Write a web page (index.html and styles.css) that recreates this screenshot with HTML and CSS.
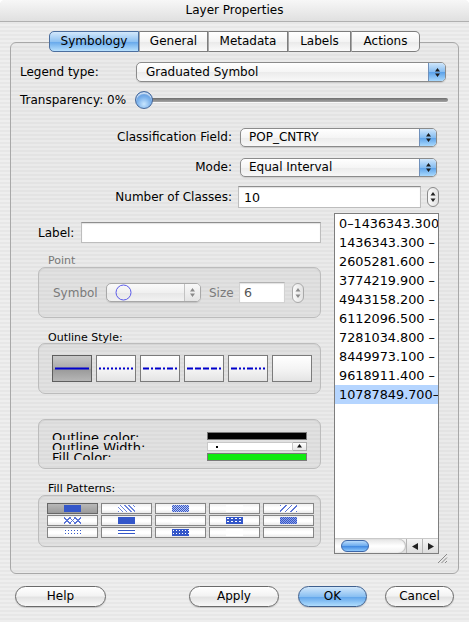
FILE: index.html
```html
<!DOCTYPE html>
<html lang="en">
<head>
  <meta charset="UTF-8">
  <title>Layer Properties</title>
  <link rel="stylesheet" href="styles.css">
</head>
<body>
  <div class="window">
    <div class="titlebar">Layer Properties</div>

    <div class="tabs">
      <span class="tab active">Symbology</span>
      <span class="tab">General</span>
      <span class="tab">Metadata</span>
      <span class="tab">Labels</span>
      <span class="tab">Actions</span>
    </div>

    <div class="tabbox">
      <div class="legend-row">
        <span class="legend-label">Legend type:</span>
        <div class="popup legend-popup">
          <span class="popup-text">Graduated Symbol</span>
          <span class="popup-cap"><svg width="7" height="11" viewBox="0 0 7 11"><path d="M3.5 1 L6 4.5 L1 4.5 Z M1 6.5 L6 6.5 L3.5 10 Z" fill="#1c1c1c"/></svg></span>
        </div>
      </div>

      <div class="trans-row">
        <span class="trans-label">Transparency: 0%</span>
        <div class="slider">
          <span class="slider-track"></span>
          <span class="slider-knob"></span>
        </div>
      </div>

      <div class="class-grid">
        <span class="field-label">Classification Field:</span>
        <div class="popup small-popup">
          <span class="popup-text">POP_CNTRY</span>
          <span class="popup-cap"><svg width="7" height="11" viewBox="0 0 7 11"><path d="M3.5 1 L6 4.5 L1 4.5 Z M1 6.5 L6 6.5 L3.5 10 Z" fill="#1c1c1c"/></svg></span>
        </div>
        <span class="field-label">Mode:</span>
        <div class="popup small-popup">
          <span class="popup-text">Equal Interval</span>
          <span class="popup-cap"><svg width="7" height="11" viewBox="0 0 7 11"><path d="M3.5 1 L6 4.5 L1 4.5 Z M1 6.5 L6 6.5 L3.5 10 Z" fill="#1c1c1c"/></svg></span>
        </div>
        <span class="field-label">Number of Classes:</span>
        <div class="num-field">
          <span class="textfield classes-field">10</span>
          <span class="stepper"><svg width="10" height="18" viewBox="0 0 10 18"><path d="M5 4 L7.5 7.5 L2.5 7.5 Z M2.5 10.5 L7.5 10.5 L5 14 Z" fill="#222"/></svg></span>
        </div>
      </div>

      <div class="lower">
        <div class="left-col">
          <div class="label-row">
            <span class="label-text">Label:</span>
            <span class="textfield label-field"></span>
          </div>

          <div class="caption caption-point">Point</div>
          <div class="group point-group">
            <span class="sym-label">Symbol</span>
            <div class="popup sym-popup">
              <svg class="sym-circle" width="17" height="17" viewBox="0 0 17 17"><circle cx="8.5" cy="8.5" r="7.5" fill="none" stroke="#5a5ae8" stroke-width="1"/></svg>
              <span class="popup-cap"><svg width="7" height="11" viewBox="0 0 7 11"><path d="M3.5 1 L6 4.5 L1 4.5 Z M1 6.5 L6 6.5 L3.5 10 Z" fill="#8a8a8a"/></svg></span>
            </div>
            <span class="size-label">Size</span>
            <span class="textfield size-field">6</span>
            <span class="stepper stepper-off"><svg width="10" height="18" viewBox="0 0 10 18"><path d="M5 4 L7.5 7.5 L2.5 7.5 Z M2.5 10.5 L7.5 10.5 L5 14 Z" fill="#8a8a8a"/></svg></span>
          </div>

          <div class="caption caption-outline">Outline Style:</div>
          <div class="group outline-group">
            <span class="line-btn selected"><svg width="38" height="25"><line x1="2" y1="12.5" x2="36" y2="12.5" stroke="#0000cc" stroke-width="2"/></svg></span>
            <span class="line-btn"><svg width="38" height="25"><line x1="2" y1="12.5" x2="36" y2="12.5" stroke="#0000cc" stroke-width="2" stroke-dasharray="2 2"/></svg></span>
            <span class="line-btn"><svg width="38" height="25"><line x1="2" y1="12.5" x2="36" y2="12.5" stroke="#0000cc" stroke-width="2" stroke-dasharray="6 2 2 2"/></svg></span>
            <span class="line-btn"><svg width="38" height="25"><line x1="2" y1="12.5" x2="36" y2="12.5" stroke="#0000cc" stroke-width="2" stroke-dasharray="6 2"/></svg></span>
            <span class="line-btn"><svg width="38" height="25"><line x1="2" y1="12.5" x2="36" y2="12.5" stroke="#0000cc" stroke-width="2" stroke-dasharray="6 2 2 2 2 2"/></svg></span>
            <span class="line-btn"></span>
          </div>

          <div class="group color-group">
            <div class="color-labels">
              <div class="clip-row">Outline color:</div>
              <div class="clip-row">Outline Width:</div>
              <div class="clip-row">Fill Color:</div>
            </div>
            <div class="swatches">
              <span class="swatch swatch-black"></span>
              <div class="width-row">
                <span class="width-field"><span class="tick"></span></span>
                <span class="width-step"><svg width="9" height="8" viewBox="0 0 9 8"><path d="M4.5 1 L7 4.5 L2 4.5 Z" fill="#111"/></svg></span>
              </div>
              <span class="swatch swatch-green"></span>
            </div>
          </div>

          <div class="caption caption-fill">Fill Patterns:</div>
          <div class="group fill-group">
            <span class="cell selected"><span class="pat p1"></span></span>
            <span class="cell"><span class="pat p2"></span></span>
            <span class="cell"><span class="pat p3"></span></span>
            <span class="cell"><span class="pat p4"></span></span>
            <span class="cell"><span class="pat p5"></span></span>
            <span class="cell"><span class="pat p6"></span></span>
            <span class="cell"><span class="pat p7"></span></span>
            <span class="cell"><span class="pat p4"></span></span>
            <span class="cell"><span class="pat p9"></span></span>
            <span class="cell"><span class="pat p10"></span></span>
            <span class="cell"><span class="pat p11"></span></span>
            <span class="cell"><span class="pat p12"></span></span>
            <span class="cell"><span class="pat p13"></span></span>
            <span class="cell"><span class="pat p14"></span></span>
            <span class="cell"><span class="pat p15"></span></span>
          </div>
        </div>

        <div class="class-list">
          <div class="list-items">
            <div class="list-item">0–1436343.300</div>
            <div class="list-item">1436343.300 –</div>
            <div class="list-item">2605281.600 –</div>
            <div class="list-item">3774219.900 –</div>
            <div class="list-item">4943158.200 –</div>
            <div class="list-item">6112096.500 –</div>
            <div class="list-item">7281034.800 –</div>
            <div class="list-item">8449973.100 –</div>
            <div class="list-item">9618911.400 –</div>
            <div class="list-item current">10787849.700–</div>
          </div>
          <div class="hscroll">
            <div class="scroll-track"><span class="scroll-thumb"></span></div>
            <span class="scroll-arrow"><svg width="8" height="9" viewBox="0 0 8 9"><path d="M1 4.5 L7 1 L7 8 Z" fill="#222"/></svg></span>
            <span class="scroll-arrow"><svg width="8" height="9" viewBox="0 0 8 9"><path d="M7 4.5 L1 1 L1 8 Z" fill="#222"/></svg></span>
          </div>
          <svg class="grip" width="11" height="11" viewBox="0 0 11 11">
            <path d="M10 1 L1 10 M10 4.5 L4.5 10 M10 8 L8 10" stroke="#8a8a8a" stroke-width="1"/>
          </svg>
        </div>
      </div>
    </div>

    <div class="buttons">
      <span class="btn btn-help">Help</span>
      <span class="btn btn-apply">Apply</span>
      <span class="btn btn-ok">OK</span>
      <span class="btn btn-cancel">Cancel</span>
    </div>
  </div>
</body>
</html>
```

FILE: styles.css
```css
* {
  box-sizing: border-box;
}

body {
  margin: 0;
  background: #fff;
}

.window {
  width: 469px;
  height: 622px;
  overflow: hidden;
  border-radius: 5px 5px 0 0;
  font: 12px "DejaVu Sans", "Liberation Sans", sans-serif;
  color: #000;
  background: repeating-linear-gradient(#eeeeee 0 2px, #e7e7e7 2px 4px);
}

.titlebar {
  height: 22px;
  line-height: 21px;
  text-align: center;
  border-bottom: 1px solid #b0b0b0;
  background: linear-gradient(#f7f7f7, #e0e0e0);
}

/* tabs */
.tabs {
  display: flex;
  justify-content: center;
  margin-top: 9px;
  height: 21px;
  position: relative;
  z-index: 1;
}

.tab {
  height: 21px;
  line-height: 19px;
  text-align: center;
  border: 1px solid #7d7d7d;
  border-left: 1px solid #a8a8a8;
  background: linear-gradient(#ffffff, #f4f4f4 50%, #e9e9e9 51%, #fafafa);
}

.tab:nth-child(1) { width: 90px; border-left-color: #7d7d7d; border-radius: 5px 0 0 5px; }
.tab:nth-child(2) { width: 69px; }
.tab:nth-child(3) { width: 80px; }
.tab:nth-child(4) { width: 63px; }
.tab:nth-child(5) { width: 69px; border-radius: 0 5px 5px 0; }

.tab.active {
  border-color: #4b6e9e;
  background: linear-gradient(#d3e8fb, #8fc2f2 50%, #63a6ea 51%, #b7e0fd);
}

.tabbox {
  margin: -10px 10px 0;
  height: 532px;
  border: 1px solid #a8a8a8;
  border-radius: 6px;
  background: rgba(0, 0, 0, 0.015);
}

/* popups */
.popup {
  display: flex;
  align-items: center;
  height: 20px;
  border: 1px solid #8b8b8b;
  border-radius: 5px;
  overflow: hidden;
  background: linear-gradient(#ffffff, #f5f5f5 50%, #ebebeb 51%, #f8f8f8);
  box-shadow: 0 1px 1px rgba(0, 0, 0, 0.12);
}

.popup-text {
  padding-left: 8px;
  white-space: nowrap;
}

.popup-cap {
  margin-left: auto;
  width: 17px;
  height: 100%;
  display: flex;
  align-items: center;
  justify-content: center;
  border-left: 1px solid #6f90bb;
  background: linear-gradient(#cfe6fb, #86bdf1 50%, #5aa0e8 51%, #a9d9fd);
}

.legend-row {
  display: flex;
  align-items: center;
  height: 20px;
  margin-top: 19px;
  padding-left: 9px;
}

.legend-label {
  width: 116px;
}

.legend-popup {
  width: 310px;
}

.legend-popup .popup-text {
  padding-left: 9px;
}

/* slider */
.trans-row {
  display: flex;
  align-items: center;
  height: 18px;
  margin-top: 9px;
  padding-left: 9px;
}

.trans-label {
  width: 115px;
}

.slider {
  position: relative;
  width: 313px;
  height: 18px;
}

.slider-track {
  position: absolute;
  left: 6px;
  right: 0;
  top: 7px;
  height: 4px;
  border-radius: 2px;
  background: linear-gradient(#6e6e6e, #a5a5a5);
  box-shadow: 0 1px 0 #f8f8f8;
}

.slider-knob {
  position: absolute;
  left: 0;
  top: 0;
  width: 18px;
  height: 18px;
  border-radius: 50%;
  border: 1px solid #44679a;
  background: radial-gradient(circle at 50% 75%, #c8e6ff, #7fb4ec 45%, #3e7fd0 100%);
  box-shadow: inset 0 2px 1px rgba(255, 255, 255, 0.7);
}

/* classification */
.class-grid {
  display: grid;
  grid-template-columns: 221px 200px;
  grid-auto-rows: 20px;
  column-gap: 8px;
  row-gap: 10px;
  margin-top: 18px;
}

.field-label {
  align-self: center;
  text-align: right;
}

.small-popup {
  width: 197px;
  height: 19px;
  align-self: center;
}

.num-field {
  display: flex;
  align-items: center;
  margin-left: -2px;
}

.textfield {
  display: flex;
  align-items: center;
  background: #fff;
  border: 1px solid #bdbdbd;
  border-top-color: #8e8e8e;
  box-shadow: inset 0 1px 1px rgba(0, 0, 0, 0.12);
}

.classes-field {
  width: 183px;
  height: 22px;
  padding-left: 5px;
  font-size: 12.6px;
}

.stepper {
  display: flex;
  width: 12px;
  height: 20px;
  margin-left: 6px;
  border: 1px solid #8a8a8a;
  border-radius: 6px;
  overflow: hidden;
  background: linear-gradient(90deg, #fafafa, #e2e2e2);
}

/* lower part */
.lower {
  display: flex;
  margin-top: 6px;
  padding-left: 27px;
}

.left-col {
  width: 283px;
}

.label-row {
  display: flex;
  align-items: center;
  height: 21px;
  margin-top: 9px;
}

.label-text {
  width: 43px;
}

.label-field {
  flex: 1;
  height: 21px;
}

.caption {
  height: 13px;
  line-height: 13px;
  padding-left: 10px;
  font-size: 11px;
}

.caption-point {
  margin-top: 11px;
  color: #777;
}

.caption-outline {
  margin-top: 13px;
  height: 12px;
}

.caption-fill {
  margin-top: 13px;
}

.group {
  border: 1px solid #bcbcbc;
  border-radius: 7px;
  background: rgba(0, 0, 0, 0.035);
  box-shadow: inset 0 1px 1px rgba(0, 0, 0, 0.06);
}

.point-group {
  display: flex;
  align-items: center;
  height: 51px;
  padding-left: 14px;
  color: #7a7a7a;
}

.sym-label {
  width: 53px;
}

.sym-popup {
  width: 95px;
  height: 19px;
  border-color: #a8a8a8;
  background: linear-gradient(#fafafa, #f0f0f0 50%, #e6e6e6 51%, #f2f2f2);
}

.sym-circle {
  margin-left: 8px;
}

.sym-popup .popup-cap {
  width: 16px;
  border-left-color: #c2c2c2;
  background: linear-gradient(#f8f8f8, #e4e4e4);
}

.size-label {
  width: 30px;
  margin-left: 8px;
}

.size-field {
  width: 46px;
  height: 21px;
  padding-left: 4px;
  color: #555;
  font-size: 12.6px;
  border-color: #d2d2d2;
  border-top-color: #b2b2b2;
}

.stepper-off {
  margin-left: 7px;
  border-color: #a9a9a9;
}

.outline-group {
  display: flex;
  gap: 4px;
  height: 51px;
  padding: 11px 0 0 13px;
}

.line-btn {
  width: 40px;
  height: 27px;
  border: 1px solid #7b7b7b;
  background: linear-gradient(#ffffff, #f2f2f2 60%, #e4e4e4);
}

.line-btn svg {
  display: block;
}

.line-btn.selected {
  background: linear-gradient(#c9c9c9, #a9a9a9 50%, #989898 51%, #b6b6b6);
  border-color: #5e5e5e;
}

.color-group {
  display: flex;
  height: 50px;
  margin-top: 25px;
  padding: 10px 13px 0 13px;
}

.clip-row {
  height: 10px;
  line-height: 16px;
  font-size: 13px;
  overflow: hidden;
}

.swatches {
  margin-left: auto;
  margin-top: 2px;
  width: 100px;
  display: flex;
  flex-direction: column;
  gap: 2px;
}

.swatch {
  height: 8px;
  border: 1px solid #7a7a7a;
}

.swatch-black {
  background: #000;
}

.swatch-green {
  background: #10ea10;
}

.width-row {
  display: flex;
  height: 9px;
}

.width-field {
  position: relative;
  width: 86px;
  background: #fff;
  border: 1px solid #c8c8c8;
}

.tick {
  position: absolute;
  left: 8px;
  top: 3px;
  width: 2px;
  height: 2px;
  background: #000;
}

.width-step {
  flex: 1;
  display: flex;
  justify-content: center;
  border: 1px solid #aaa;
  border-left: none;
  background: linear-gradient(#fff, #e6e6e6);
  overflow: hidden;
}

/* fill patterns */
.fill-group {
  display: grid;
  grid-template-columns: repeat(5, 51px);
  grid-auto-rows: 11px;
  column-gap: 3px;
  row-gap: 1px;
  height: 52px;
  padding: 7px 0 0 8px;
}

.cell {
  display: flex;
  align-items: center;
  justify-content: center;
  border: 1px solid #858585;
  background: linear-gradient(#f0f0f0, #ffffff 40%, #ffffff 60%, #e9e9e9);
}

.cell.selected {
  background: linear-gradient(#b8b8b8, #9a9a9a);
  border-color: #666;
}

.pat {
  width: 17px;
  height: 7px;
}

.p1 { background: #3457c9; }
.p2 { background: repeating-linear-gradient(45deg, #6d85dc 0 1px, #fff 1px 3px); }
.p3 { background: conic-gradient(#3457c9 25%, #b9c6f1 0 50%, #3457c9 0 75%, #b9c6f1 0) 0 0 / 2px 2px; }
.p4 { background: #fff; }
.p5 { background: repeating-linear-gradient(-45deg, #5a74d6 0 1px, #fff 1px 4px); }
.p6 { background: repeating-linear-gradient(45deg, #5a74d6 0 1px, transparent 1px 4px), repeating-linear-gradient(-45deg, #5a74d6 0 1px, #fff 1px 4px); }
.p7 { background: radial-gradient(#3457c9 0.8px, transparent 1px) 0 0 / 2px 2px, #dbe2f8; }
.p9 { background: radial-gradient(#ffffff 0.8px, transparent 1px) 0 0 / 4px 3px, #3457c9; }
.p10 { background: conic-gradient(#3457c9 25%, #8ea0e4 0 50%, #3457c9 0 75%, #8ea0e4 0) 0 0 / 2px 2px; }
.p11 { background: radial-gradient(#3457c9 0.7px, transparent 0.9px) 0 0 / 3px 3px, #fff; }
.p12 { background: repeating-linear-gradient(#fff 0 1px, #3457c9 1px 2px, #fff 2px 3px); }
.p13 { background: radial-gradient(#ffffff 0.7px, transparent 0.9px) 0 0 / 3px 3px, #3457c9; }
.p14 { background: radial-gradient(#3457c9 0.7px, transparent 0.9px) 0 0 / 4px 2px, #fff; }
.p15 { background: transparent; }

/* class list */
.class-list {
  position: relative;
  display: flex;
  flex-direction: column;
  width: 105px;
  height: 341px;
  margin-left: 13px;
  background: #fff;
  border: 1px solid #7e7e7e;
}

.list-items {
  flex: 1;
  overflow: hidden;
}

.list-item {
  height: 19px;
  line-height: 19px;
  padding-left: 4px;
  font-size: 12.8px;
  white-space: nowrap;
  overflow: hidden;
}

.list-item.current {
  background: #b5d5ff;
}

.hscroll {
  display: flex;
  height: 15px;
  border-top: 1px solid #c9c9c9;
  background: linear-gradient(#f5f5f5, #dcdcdc);
}

.scroll-track {
  flex: 1;
  display: flex;
  align-items: center;
  padding-left: 6px;
  border-radius: 0 7px 7px 0;
  background: linear-gradient(#e4e4e4, #ffffff 50%, #f0f0f0);
  box-shadow: inset -1px 0 1px rgba(0, 0, 0, 0.25);
}

.scroll-thumb {
  width: 28px;
  height: 12px;
  border-radius: 6px;
  border: 1px solid #3c66a8;
  background: linear-gradient(#b8dbfc, #6aaaee 50%, #3f87e0 51%, #8cc7fb);
}

.scroll-arrow {
  width: 16px;
  display: flex;
  align-items: center;
  justify-content: center;
  border-left: 1px solid #b4b4b4;
}

.grip {
  position: absolute;
  right: -10px;
  bottom: -11px;
}

/* buttons */
.buttons {
  display: flex;
  margin-top: 12px;
  padding: 0 15px;
}

.btn {
  height: 21px;
  line-height: 19px;
  text-align: center;
  border: 1px solid #6a6a6a;
  border-radius: 11px;
  background: linear-gradient(#ffffff, #f3f3f3 45%, #e3e3e3 55%, #f8f8f8);
  box-shadow: 0 1px 1px rgba(0, 0, 0, 0.15);
}

.btn-help { width: 91px; }
.btn-apply { width: 90px; margin-left: auto; }
.btn-ok { width: 69px; margin-left: 19px; }
.btn-cancel { width: 69px; margin-left: 18px; }

.btn-ok {
  border-color: #3e5f8e;
  background: linear-gradient(#d1e7fb, #8ac0f2 50%, #5ea3ea 51%, #b0ddfd);
}
```
